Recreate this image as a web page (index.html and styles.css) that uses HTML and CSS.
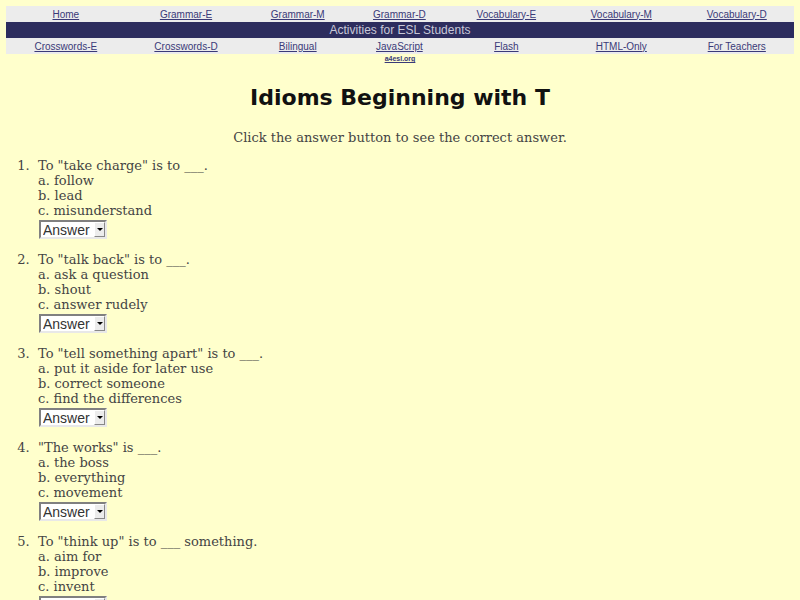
FILE: index.html
```html
<!DOCTYPE html>
<html lang="en">
<head>
  <meta charset="UTF-8">
  <title>Idioms Beginning with T</title>
  <link rel="stylesheet" href="styles.css">
</head>
<body>

<table class="nav">
  <tr class="links">
    <td><a href="#">Home</a></td>
    <td><a href="#">Grammar-E</a></td>
    <td><a href="#">Grammar-M</a></td>
    <td><a href="#">Grammar-D</a></td>
    <td><a href="#">Vocabulary-E</a></td>
    <td><a href="#">Vocabulary-M</a></td>
    <td><a href="#">Vocabulary-D</a></td>
  </tr>
  <tr class="banner">
    <td colspan="7">Activities for ESL Students</td>
  </tr>
  <tr class="links">
    <td><a href="#">Crosswords-E</a></td>
    <td><a href="#">Crosswords-D</a></td>
    <td><a href="#">Bilingual</a></td>
    <td><a href="#">JavaScript</a></td>
    <td><a href="#">Flash</a></td>
    <td><a href="#">HTML-Only</a></td>
    <td><a href="#">For Teachers</a></td>
  </tr>
</table>
<div class="site"><a href="#">a4esl.org</a></div>

<h1>Idioms Beginning with T</h1>
<p class="intro">Click the answer button to see the correct answer.</p>

<ol class="quiz">
  <li>
    To "take charge" is to ___.<br>
    a. follow<br>
    b. lead<br>
    c. misunderstand<br>
    <span class="pick"><select><option>Answer</option><option>b. lead</option></select><span class="arrow"></span></span>
  </li>
  <li>
    To "talk back" is to ___.<br>
    a. ask a question<br>
    b. shout<br>
    c. answer rudely<br>
    <span class="pick"><select><option>Answer</option><option>c. answer rudely</option></select><span class="arrow"></span></span>
  </li>
  <li>
    To "tell something apart" is to ___.<br>
    a. put it aside for later use<br>
    b. correct someone<br>
    c. find the differences<br>
    <span class="pick"><select><option>Answer</option><option>c. find the differences</option></select><span class="arrow"></span></span>
  </li>
  <li>
    "The works" is ___.<br>
    a. the boss<br>
    b. everything<br>
    c. movement<br>
    <span class="pick"><select><option>Answer</option><option>b. everything</option></select><span class="arrow"></span></span>
  </li>
  <li>
    To "think up" is to ___ something.<br>
    a. aim for<br>
    b. improve<br>
    c. invent<br>
    <span class="pick"><select><option>Answer</option><option>c. invent</option></select><span class="arrow"></span></span>
  </li>
</ol>

</body>
</html>
```

FILE: styles.css
```css
body {
  margin: 6px;
  background: #ffffcc;
  color: #444;
  font-family: "DejaVu Serif", serif;
  font-size: 13px;
}
.nav {
  width: 100%;
  border-collapse: collapse;
  font-family: "Liberation Sans", Arial, sans-serif;
  font-size: 10px;
}
.nav td {
  text-align: center;
  padding: 0;
}
.links td {
  background: #ececec;
  height: 16px;
}
.links a {
  color: #3a3a78;
}
.banner td {
  background: #2d2d5e;
  color: #c8c8d8;
  font-size: 12px;
  height: 16px;
}
.site {
  text-align: center;
  font-family: "Liberation Sans", Arial, sans-serif;
  font-size: 7px;
  font-weight: bold;
  line-height: 9px;
}
.site a {
  color: #3a3a78;
}
h1 {
  text-align: center;
  font-family: "Comic Sans MS", "DejaVu Sans", sans-serif;
  font-size: 22px;
  color: #111;
  margin: 22px 0 0;
}
.intro {
  text-align: center;
  margin: 20px 0 0;
}
.quiz {
  margin: 13px 0 0;
  padding-left: 32px;
  line-height: 15px;
}
.quiz li {
  margin-bottom: 13px;
}
.quiz li::marker {
  content: counter(list-item) ".\00a0\00a0 ";
}
.pick {
  position: relative;
  display: inline-block;
  margin: 2px 0 0 1px;
}
.pick select {
  appearance: none;
  width: 68px;
  height: 19px;
  padding: 0 0 0 2px;
  border: 2px solid;
  border-color: #808080 #e8e8e8 #e8e8e8 #808080;
  background: #fff;
  color: #333;
  font-family: "Liberation Sans", Arial, sans-serif;
  font-size: 14px;
  vertical-align: top;
}
.arrow {
  position: absolute;
  right: 2px;
  top: 2px;
  width: 11px;
  height: 15px;
  background: #ececec;
  box-sizing: border-box;
  border: 1px solid;
  border-color: #fff #888 #888 #fff;
  pointer-events: none;
}
.arrow::after {
  content: "";
  position: absolute;
  left: 2px;
  top: 5px;
  border: 3px solid transparent;
  border-top: 3px solid #000;
}
```
